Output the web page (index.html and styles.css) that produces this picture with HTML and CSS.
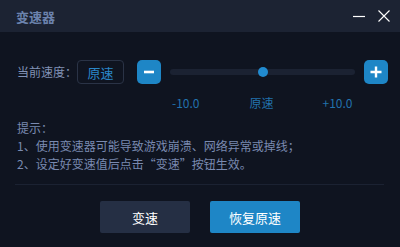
FILE: index.html
```html
<!DOCTYPE html>
<html lang="zh">
<head>
<meta charset="utf-8">
<link rel="stylesheet" href="styles.css">
</head>
<body>
<div class="win">
  <div class="titlebar">
    <span class="title">变速器</span>
    <div class="ctrls">
      <svg class="ic" width="12" height="12" viewBox="0 0 12 12"><path d="M0 6.5H12" stroke="#fff" stroke-width="1.2"/></svg>
      <svg class="ic" width="12" height="12" viewBox="0 0 12 12"><path d="M0.5 0.5L11.5 11.5M11.5 0.5L0.5 11.5" stroke="#fff" stroke-width="1.1"/></svg>
    </div>
  </div>
  <div class="content">
    <div class="speed-row">
      <span class="label">当前速度：</span>
      <span class="valbox">原速</span>
      <button class="sq minus"><svg width="12" height="12" viewBox="0 0 12 12"><path d="M1 6H11" stroke="#fff" stroke-width="2.6"/></svg></button>
      <div class="track"><span class="thumb"></span></div>
      <button class="sq"><svg width="12" height="12" viewBox="0 0 12 12"><path d="M0.5 6H11.5M6 0.5V11.5" stroke="#fff" stroke-width="2.4"/></svg></button>
    </div>
    <div class="scale">
      <span>-10.0</span>
      <span>原速</span>
      <span>+10.0</span>
    </div>
    <div class="tips">
      <p>提示：</p>
      <p>1、使用变速器可能导致游戏崩溃、网络异常或掉线；</p>
      <p>2、设定好变速值后点击“变速”按钮生效。</p>
    </div>
    <div class="actions">
      <button class="btn dark">变速</button>
      <button class="btn blue">恢复原速</button>
    </div>
  </div>
</div>
</body>
</html>
```
FILE: styles.css
```css
* { box-sizing: border-box; }
html, body { margin: 0; padding: 0; }
body {
  width: 400px; height: 247px; overflow: hidden;
  background: #0f1420;
  font-family: "Noto Sans CJK SC", "Liberation Sans", sans-serif;
}
.win { width: 400px; height: 247px; display: flex; flex-direction: column; }
.titlebar {
  height: 32px; background: #1c2333; flex-shrink: 0;
  display: flex; align-items: center; justify-content: space-between;
  padding: 0 10px 0 16px;
}
.title { color: #6b82ad; font-size: 13px; font-weight: bold; line-height: 1; }
.ctrls { display: flex; gap: 13px; align-items: center; }
.ic { display: block; }
.content { padding: 0 12px 0 16px; }
.speed-row {
  display: flex; align-items: center; margin-top: 28px; height: 24px;
}
.speed-row > * { flex-shrink: 0; }
.label {
  color: #8192b6; font-size: 12px; width: 61px; padding-left: 1px; line-height: 1; white-space: nowrap;
  font-family: "Noto Sans CJK TC", "Noto Sans CJK SC", sans-serif;
}
.valbox {
  width: 47px; height: 24px; border: 1px solid #2a3346; border-radius: 4px;
  color: #2a86c8; font-size: 13px; display: flex; align-items: center; justify-content: center;
  line-height: 1;
}
.sq {
  width: 24px; height: 24px; border: 0; border-radius: 5px; background: #1e86c6;
  padding: 0; display: flex; align-items: center; justify-content: center;
}
.minus { margin-left: 13px; }
.track {
  position: relative; width: 185px; height: 6px; border-radius: 3px; background: #1b2232;
  margin: 0 9px;
}
.thumb {
  position: absolute; left: 88px; top: -2px; width: 10px; height: 10px; border-radius: 50%;
  background: #218bd0;
}
.scale {
  display: flex; margin-top: 10px; height: 17px; align-items: center;
  color: #2272ad; font-size: 12px; line-height: 1;
}
.scale span:nth-child(1) { margin-left: 156px; }
.scale span:nth-child(2) { margin-left: 50px; }
.scale span:nth-child(3) { margin-left: 49px; }
.tips {
  margin: 8px 4px 0 -1px; color: #7a8ab0; font-size: 12px; padding-left: 2px; padding-bottom: 11px;
  border-bottom: 1px solid #1b2232;
  font-family: "Noto Sans CJK TC", "Noto Sans CJK SC", sans-serif;
}
.tips p { margin: 0; line-height: 18px; }
.actions { display: flex; justify-content: center; gap: 20px; margin-top: 16px; padding-right: 4px; }
.btn {
  width: 90px; height: 32px; border: 0; border-radius: 2px; color: #fff;
  font-family: "Noto Sans CJK SC", sans-serif; font-size: 13px; padding: 0;
}
.dark { background: #252f44; }
.blue { background: #1e86c6; }
```
